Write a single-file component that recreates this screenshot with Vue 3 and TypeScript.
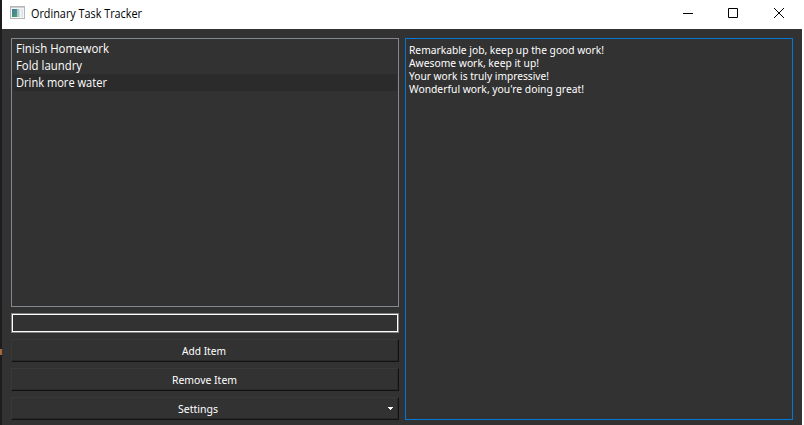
<script setup lang="ts">
import { ref } from 'vue'

interface Line { text: string; width: number }

const tasks = ref<Line[]>([
  { text: 'Finish Homework', width: 93 },
  { text: 'Fold laundry', width: 66 },
  { text: 'Drink more water', width: 91 },
])
const selected = ref(2)
const messages = ref<Line[]>([
  { text: 'Remarkable job, keep up the good work!', width: 195 },
  { text: 'Awesome work, keep it up!', width: 130 },
  { text: 'Your work is truly impressive!', width: 140 },
  { text: "Wonderful work, you're doing great!", width: 175 },
])
const draft = ref('')
</script>

<template>
  <div class="desktop">
    <i class="sliver"></i>
    <div class="window">
      <header class="titlebar">
        <svg class="app-icon" width="15" height="13" viewBox="0 0 15 13">
          <defs>
            <linearGradient id="pane" x1="0" y1="0" x2="1" y2="1">
              <stop offset="0" stop-color="#3f78a8" />
              <stop offset="1" stop-color="#4fa568" />
            </linearGradient>
          </defs>
          <rect x="0.5" y="0.5" width="14" height="12" fill="#f4f5f6" stroke="#b4b8bb" />
          <rect x="1" y="1" width="13" height="1" fill="#c9cdd1" />
          <rect x="2" y="3" width="5" height="8" fill="url(#pane)" />
          <rect x="7" y="3" width="2" height="8" fill="#a9cbd0" />
          <rect x="9" y="3" width="1" height="8" fill="#d5e2e4" />
          <rect x="11" y="3" width="2" height="8" fill="#e3e6e8" />
        </svg>
        <svg class="title" width="113" height="20"><text x="0" y="14" textLength="111" lengthAdjust="spacingAndGlyphs">Ordinary Task Tracker</text></svg>
        <div class="controls">
          <button aria-label="Minimize"><svg width="10" height="10"><path d="M0 5.5H10" /></svg></button>
          <button aria-label="Maximize"><svg width="10" height="10"><path d="M.5 .5H9.5V9.5H.5Z" /></svg></button>
          <button aria-label="Close"><svg width="10" height="10"><path d="M0 0L10 10M10 0L0 10" /></svg></button>
        </div>
      </header>
      <main class="content">
        <section class="left">
          <ul class="tasks">
            <li v-for="(t, i) in tasks" :key="t.text" :class="{ selected: i === selected }" @click="selected = i">
              <svg width="200" height="17"><text x="0" y="13" :textLength="t.width" lengthAdjust="spacingAndGlyphs">{{ t.text }}</text></svg>
            </li>
          </ul>
          <input v-model="draft" class="entry" />
          <button class="btn"><svg width="44" height="17"><text x="0" y="13" textLength="44" lengthAdjust="spacingAndGlyphs">Add Item</text></svg></button>
          <button class="btn"><svg width="65" height="17"><text x="0" y="13" textLength="65" lengthAdjust="spacingAndGlyphs">Remove Item</text></svg></button>
          <button class="btn menu">
            <svg width="40" height="17"><text x="0" y="13" textLength="40" lengthAdjust="spacingAndGlyphs">Settings</text></svg>
            <svg class="arrow" width="5" height="3" viewBox="0 0 5 3" shape-rendering="crispEdges"><path d="M0 0H5V1H4V2H3V3H2V2H1V1H0Z" /></svg>
          </button>
        </section>
        <section class="log">
          <p v-for="m in messages" :key="m.text">
            <svg width="220" height="13"><text x="0" y="11" :textLength="m.width" lengthAdjust="spacingAndGlyphs">{{ m.text }}</text></svg>
          </p>
        </section>
      </main>
    </div>
  </div>
</template>

<style>
body { margin: 0; overflow: hidden; background: #fff; }
</style>

<style scoped>
* { box-sizing: border-box; }
svg { display: block; overflow: visible; }
.desktop {
  display: flex;
  width: 802px;
  height: 425px;
  background: #1c1c1c;
}
.sliver { width: 2px; height: 6px; margin-top: 349px; background: #a5673f; }
.window {
  display: flex;
  flex-direction: column;
  width: 800px;
  height: 100%;
  background: #323232;
  font-family: "Open Sans", "Noto Sans", sans-serif;
  font-size: 12px;
}
.titlebar {
  display: flex;
  height: 29px;
  flex: none;
  background: #fff;
  padding-left: 8px;
}
.app-icon { margin-top: 6px; }
.title { margin: 4px 0 0 6px; fill: #000; }
.controls { display: flex; margin-left: auto; }
.controls button {
  display: flex;
  width: 46px;
  height: 26px;
  padding: 0;
  border: 0;
  background: none;
  align-items: center;
  justify-content: center;
}
.controls button:nth-child(2) { width: 44px; }
.controls button:nth-child(1) { margin-right: 0; }
.controls button:nth-child(3) { margin-left: 1px; }
.controls path { fill: none; stroke: #000; stroke-width: 1; }
.content {
  display: flex;
  flex: 1;
  gap: 6px;
  padding: 9px 9px 5px;
}
.left { display: flex; flex-direction: column; width: 388px; }
.tasks {
  list-style: none;
  height: 269px;
  margin: 0;
  padding: 1px;
  border: 1px solid #828790;
}
.tasks li { height: 17px; padding-left: 3px; fill: #fff; }
.tasks .selected { background: #2b2b2b; }
.entry {
  height: 20px;
  margin: 6px 0;
  padding: 0 2px;
  border: 1px solid #828282;
  outline: 1px solid #fff;
  outline-offset: -2px;
  background: #323232;
  color: #fff;
}
.btn {
  display: flex;
  align-items: center;
  justify-content: center;
  height: 23px;
  margin-bottom: 6px;
  padding: 0 2px 0 0;
  border: 1px solid;
  border-color: #393939 #121212 #121212 #393939;
  box-shadow: inset -1px -1px #292929;
  background: #323232;
  font: 11px "Noto Sans", sans-serif;
  fill: #fff;
}
.btn.menu { padding-left: 166px; padding-right: 5px; justify-content: space-between; }
.log {
  width: 388px;
  height: 382px;
  padding: 4px 3px;
  border: 1px solid #0078d7;
  font: 11px "Noto Sans", sans-serif;
  fill: #fff;
}
.log p { margin: 0; height: 13px; }
</style>
